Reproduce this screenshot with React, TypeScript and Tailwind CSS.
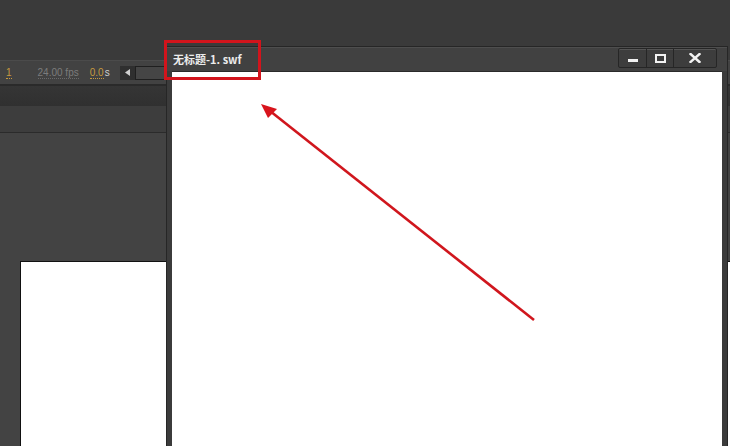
import React from 'react'

const cjk = { fontFamily: '"Noto Sans CJK SC", "Noto Sans", sans-serif' }

function WindowButtons() {
  return (
    <div className="flex h-[20px] border border-[#262626] rounded-[2px] bg-[#3d3d3d] shadow-[inset_0_1px_0_#555]">
      <div className="w-[28px] flex items-end justify-center pb-[5px] border-r border-[#262626]">
        <div className="w-[10px] h-[3px] bg-[#f2f2f2]" />
      </div>
      <div className="w-[27px] flex items-center justify-center border-r border-[#262626]">
        <div className="w-[11px] h-[9px] border-2 border-[#f2f2f2]" />
      </div>
      <div className="w-[42px] flex items-center justify-center">
        <svg width="12" height="10" viewBox="0 0 12 10">
          <path d="M1.5 1 L10.5 9 M10.5 1 L1.5 9" stroke="#f2f2f2" strokeWidth="2.4" strokeLinecap="square" />
        </svg>
      </div>
    </div>
  )
}

function Toolbar() {
  return (
    <div className="h-[23px] bg-[#424242] flex items-center text-[10px] font-['Liberation_Sans',sans-serif]">
      <span className="ml-[6px] text-[#c79a3e] border-b border-dotted border-[#c79a3e] leading-[11px]">1</span>
      <span className="ml-[26px] text-[#7c7c7c] border-b border-dotted border-[#6a6a6a] leading-[11px]">24.00 fps</span>
      <span className="ml-[11px] text-[#c79a3e] border-b border-dotted border-[#c79a3e] leading-[11px]">0.0</span>
      <span className="ml-[1px] text-[#d0d0d0] leading-[11px]">s</span>
      <div className="ml-[10px] flex h-[14px]">
        <div className="w-[15px] bg-[#2f2f2f] flex items-center justify-center">
          <svg width="5" height="7" viewBox="0 0 5 7">
            <path d="M5 0 L0 3.5 L5 7 Z" fill="#cfcfcf" />
          </svg>
        </div>
        <div className="w-[40px] bg-[#454545] border border-[#1f1f1f]" />
      </div>
    </div>
  )
}

export default function App() {
  return (
    <div className="relative w-[730px] h-[446px] overflow-hidden bg-[#3b3b3b]">
      {/* background application */}
      <div className="flex flex-col h-full">
        <div className="h-[61px] bg-[#3a3a3a] border-b border-[#4b4b4b]" />
        <Toolbar />
        <div className="h-[2px] bg-[#2a2a2a]" />
        <div className="h-[20px] bg-gradient-to-b from-[#353535] to-[#303030]" />
        <div className="h-[27px] bg-[#3d3d3d] border-b border-[#2b2b2b]" />
        <div className="flex-1 bg-[#434343] flex flex-col">
          <div className="h-[128px]" />
          <div className="flex-1 ml-[20px] bg-white border-t border-l border-[#111]" />
        </div>
      </div>

      {/* floating player window */}
      <div className="absolute left-[166px] top-[46px] w-[562px] h-[420px] bg-[#3b3b3b] border border-[#262626] flex flex-col">
        <div className="h-[24px] flex items-center justify-between pl-[6px] pr-[10px] bg-[#414141] shadow-[inset_0_1px_0_#4e4e4e]">
          <span className="text-[11px] font-bold text-[#ececec] leading-none mt-[1px]" style={cjk}>
            无标题-1. swf
          </span>
          <div className="-mt-[2px]">
            <WindowButtons />
          </div>
        </div>
        <div className="flex-1 ml-[5px] mr-[5px] bg-white border-t border-[#2a2a2a]" />
      </div>

      {/* annotation: red box */}
      <div className="absolute left-[164px] top-[40px] w-[97px] h-[40px] border-[3px] border-[#d2141c]" />

      {/* annotation: arrow */}
      <svg className="absolute left-0 top-0" width="730" height="446" viewBox="0 0 730 446">
        <line x1="534" y1="320" x2="270" y2="111" stroke="#d0161d" strokeWidth="2.6" />
        <path d="M261 104 L277 109 L268 118 Z" fill="#d8141c" />
      </svg>
    </div>
  )
}
